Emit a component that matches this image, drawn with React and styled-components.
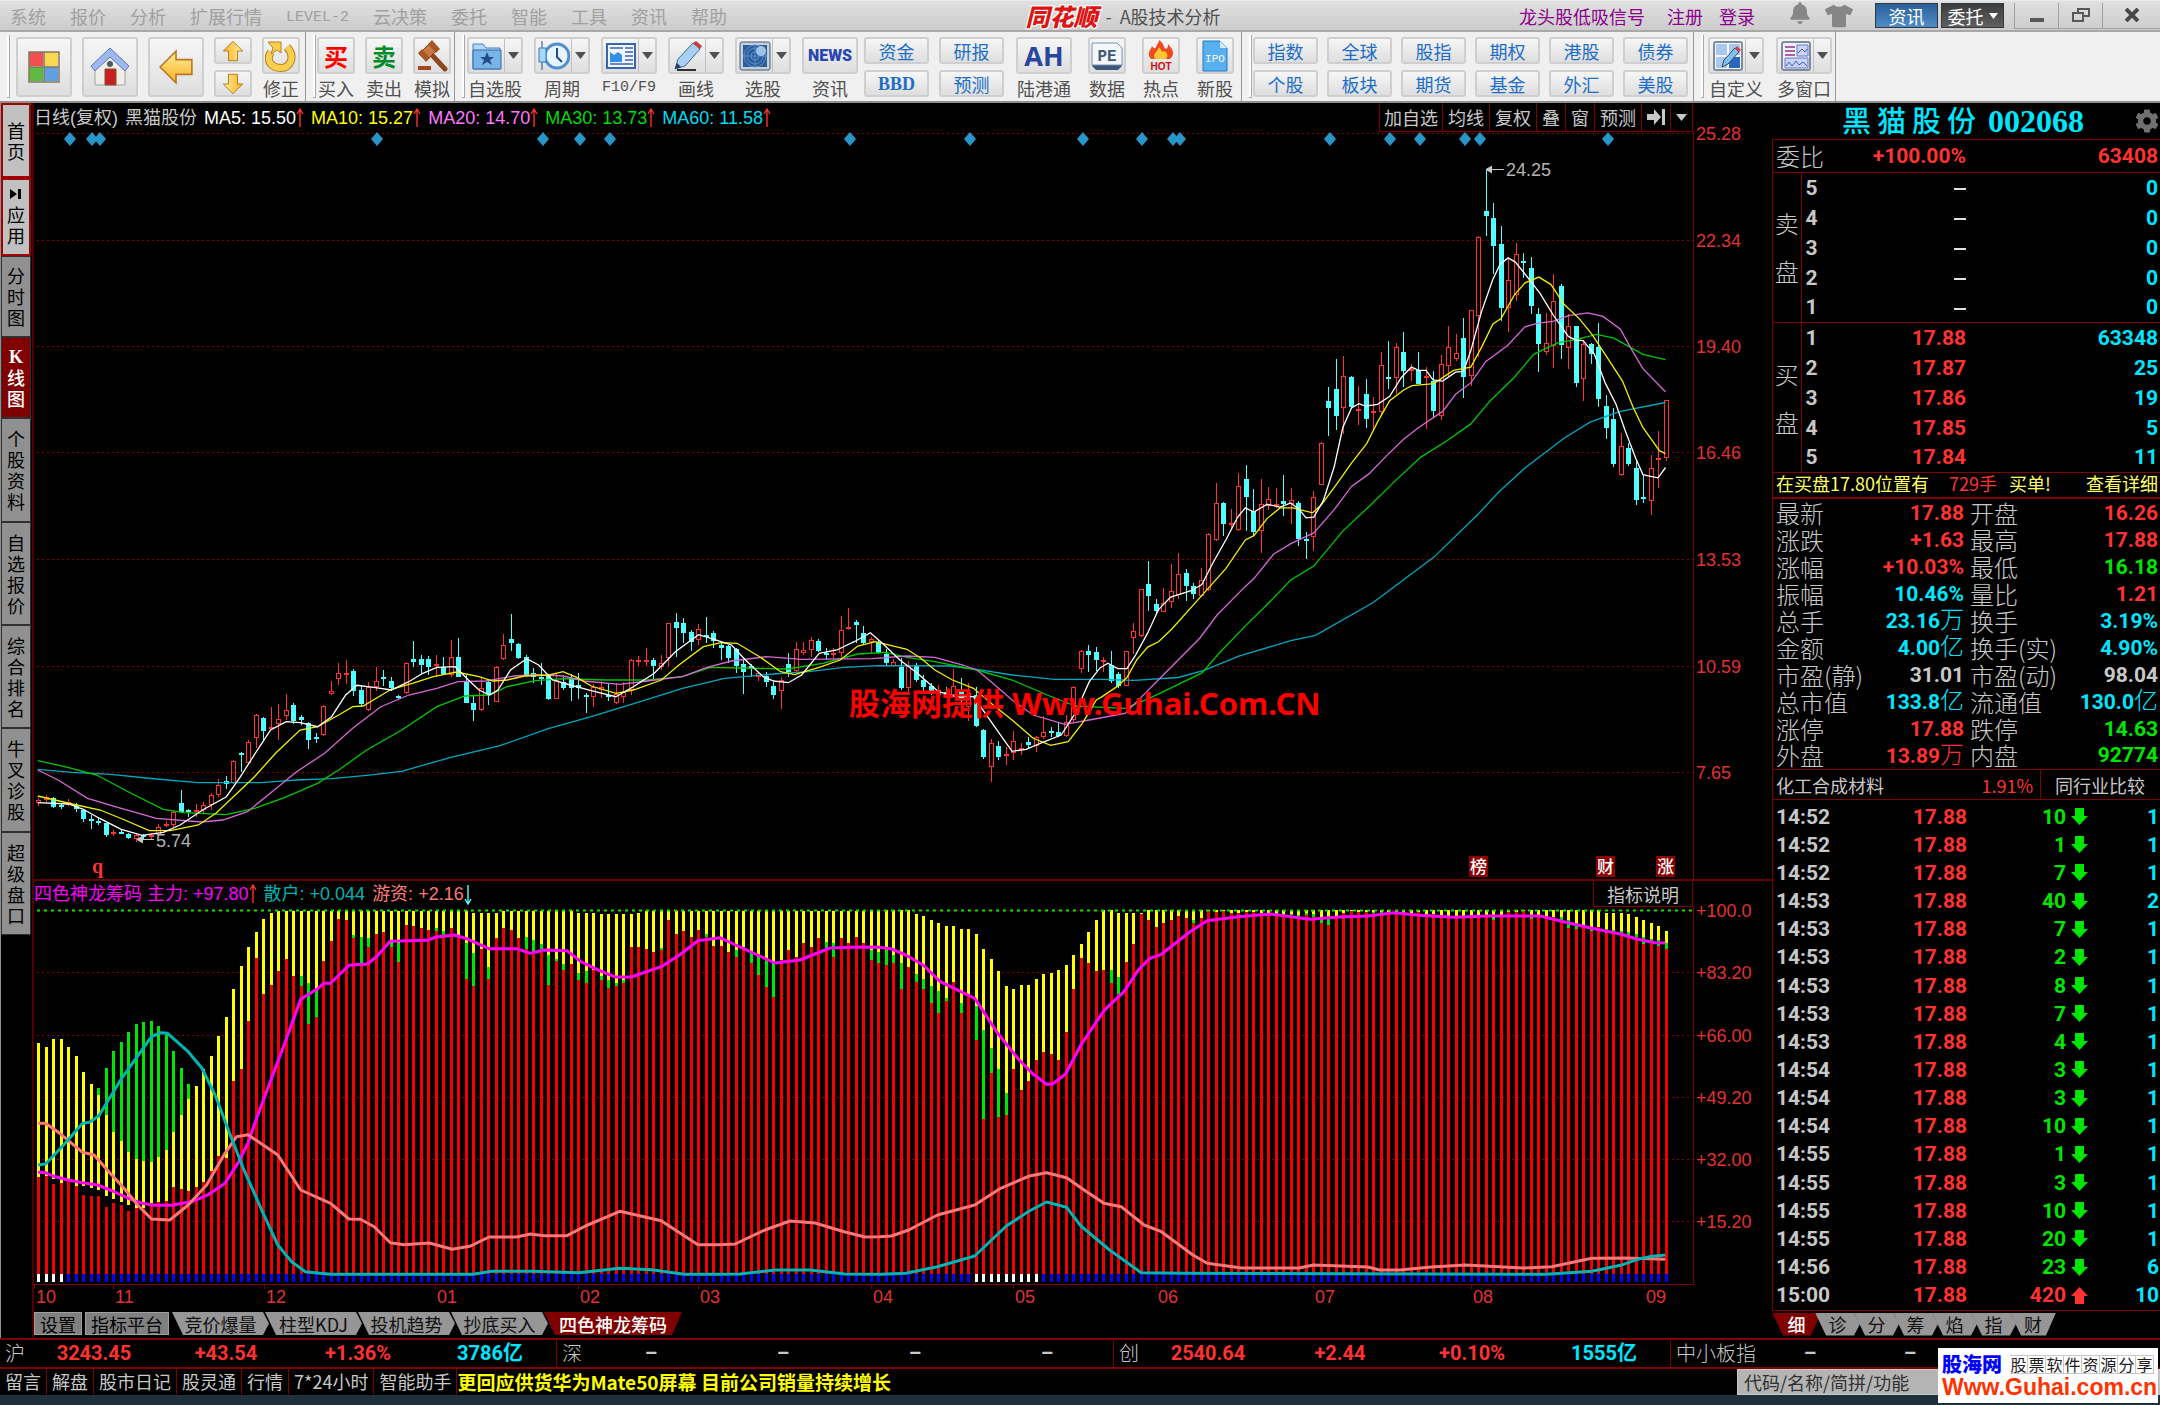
import React from "react";
import styled, { createGlobalStyle, css } from "styled-components";
import { FaBell, FaCog, FaTshirt } from "react-icons/fa";

const CJK = '"Noto Sans CJK SC", sans-serif';
const ARIAL = '"Liberation Sans", "Noto Sans CJK SC", sans-serif';
const DIGITS = 'Roboto, "Noto Sans CJK SC", sans-serif';

const color = {
  red: "#ff3232",
  cyan: "#00e6ff",
  green: "#00e600",
  gray: "#c8c8c8",
  line: "#800000",
  teal: "#00b4b4",
  pink: "#ff7878",
  magenta: "#ff00ff",
};

const GlobalStyle = createGlobalStyle`
  * { box-sizing: border-box; }
  body {
    margin: 0;
    background: #000;
    color: ${color.gray};
    font: 18px/20px ${CJK};
    overflow-x: hidden;
  }
  button, input {
    font: inherit;
    color: inherit;
    margin: 0;
    padding: 0;
    border: 0;
    background: none;
  }
  a { color: inherit; text-decoration: none; }
  table { border-collapse: collapse; border-spacing: 0; width: 100%; }
  td, th { padding: 0; font-weight: normal; text-align: left; }
`;

const Page = styled.div`
  display: flex;
  flex-direction: column;
  min-height: 100vh;
`;

/* ---------- title bar ---------- */

const TitleBar = styled.header`
  display: flex;
  justify-content: space-between;
  align-items: center;
  height: 32px;
  padding-left: 10px;
  background: linear-gradient(#e0e0e0, #cccccc);
  border-top: 1px solid #e8edf2;
  border-bottom: 2px solid #a8a8a8;
  white-space: nowrap;
`;

const Menu = styled.nav`
  display: flex;
  align-items: center;
  gap: 24px;
  color: #a0a0a0;
`;

const Level = styled.span`
  font: 15px/20px "Liberation Mono", monospace;
`;

const AppTitle = styled.div`
  display: flex;
  align-items: center;
  gap: 8px;
  color: #505050;
`;

const Logo = styled.b`
  font-size: 24px;
  font-weight: 900;
  font-style: italic;
  color: #dc1414;
  text-shadow: 1px 1px #fff, -1px -1px #fff, 1px -1px #fff, -1px 1px #fff;
`;

const Account = styled.div`
  display: flex;
  align-items: center;
  color: #8c008c;
  gap: 16px;
  svg { color: #868686; }
`;

const AccountLink = styled.a`
  margin-left: ${props => (props.$wide ? 6 : 0)}px;
`;

const SmallIcons = styled.span`
  display: flex;
  gap: 14px;
  margin: 0 6px 0 18px;
`;

const Actions = styled.div`
  display: flex;
  gap: 3px;
`;

const ActionButton = styled.button`
  display: flex;
  align-items: center;
  justify-content: center;
  gap: 5px;
  width: 63px;
  height: 25px;
  color: #fff;
  background: ${props => (props.$blue ? "linear-gradient(#2c5f98, #4f8cc8)" : "linear-gradient(#3c3c3c, #606060)")};
  border: 1px solid #303840;
`;

const WindowButtons = styled.div`
  display: flex;
  margin-left: -6px;
`;

const WindowButton = styled.button`
  display: flex;
  align-items: center;
  justify-content: center;
  width: ${props => (props.$last ? 58 : 44)}px;
  height: 26px;
  border: 1px solid #a0a0a0;
  border-top: 0;
  border-right: 0;
`;

/* ---------- toolbar ---------- */

const Toolbar = styled.div`
  display: flex;
  height: 71px;
  background: #f0f0f0;
  border-bottom: 2px solid #909090;
  color: #505050;
  white-space: nowrap;
  overflow: hidden;
`;

const Group = styled.div`
  display: flex;
  align-items: flex-start;
  gap: ${props => props.$gap || 10}px;
  padding: 5px ${props => props.$end || 3}px 0 7px;
  border-right: 1px solid #989898;
`;

const Grip = styled.span`
  width: 3px;
  height: 63px;
  margin-top: -2px;
  margin-right: ${props => props.$pull || 0}px;
  border-right: 1px solid #a8a8a8;
  border-bottom: 1px solid #a8a8a8;
  background: #fff;
`;

const Row = styled.div`
  display: flex;
  gap: ${props => props.$gap}px;
`;

const face = css`
  background: linear-gradient(#f6f6f6, #dedede);
  border: 2px solid #cfcfcf;
  border-radius: 3px;
`;

const BigButton = styled.button`
  ${face}
  display: flex;
  align-items: center;
  justify-content: center;
  width: 56px;
  height: 60px;
`;

const Stack = styled.div`
  display: flex;
  flex-direction: column;
  gap: 6px;
`;

const FlatButton = styled.button`
  ${face}
  display: flex;
  align-items: center;
  justify-content: center;
  width: ${props => (props.$narrow ? 38 : 65)}px;
  height: 27px;
  color: #1e6ec8;
`;

const Serif = styled.b`
  font: bold 18px/20px "Liberation Serif", serif;
`;

const ToolButton = styled.button`
  display: flex;
  flex-direction: column;
  align-items: center;
  width: ${props => (props.$wide ? 56 : 38)}px;
`;

const ToolFace = styled.span`
  ${face}
  display: flex;
  align-items: stretch;
  width: 100%;
  height: 37px;
  margin-bottom: 4px;
`;

const ToolIcon = styled.span`
  display: flex;
  flex: 1;
  align-items: center;
  justify-content: center;
`;

const ToolArrow = styled.span`
  display: flex;
  align-items: center;
  justify-content: center;
  width: 17px;
  border-left: 1px solid #c0c0c0;
`;

const ToolLabel = styled.span`
  ${props => props.$mono && css`font: 15px/20px "Liberation Mono", monospace;`}
`;

const WordIcon = styled.b`
  font-family: ${props => props.$font || CJK};
  font-size: ${props => props.$size}px;
  line-height: 24px;
  font-weight: ${props => props.$weight || 700};
  color: ${props => props.$color};
`;

/* ---------- body ---------- */

const Body = styled.main`
  display: flex;
  border-bottom: 2px solid ${color.line};
`;

const Side = styled.nav`
  flex: none;
  width: 34px;
  border-right: 2px solid #500000;
  border-left: 1px solid #909090;
`;

const SideTab = styled.button`
  display: flex;
  flex-direction: column;
  align-items: center;
  justify-content: center;
  width: 30px;
  height: ${props => props.$h}px;
  line-height: 21px;
  color: ${props => (props.$on ? "#fff" : "#000")};
  background: ${props => (props.$on ? color.line : props.$light ? "#c0c0c0" : "#909090")};
  border: ${props => (props.$light ? "2px solid #a00000" : "1px solid #303030")};
  font-weight: ${props => (props.$on ? 500 : 400)};
  svg { margin-bottom: 4px; }
`;

const Charts = styled.section`
  flex: 1;
  min-width: 0;
  display: flex;
  flex-direction: column;
  svg.plot { display: block; width: 100%; height: auto; overflow: visible; }
`;

const ChartHead = styled.div`
  display: flex;
  justify-content: space-between;
  height: 29px;
  padding-right: 79px;
  white-space: nowrap;
`;

const IndicatorHead = styled(ChartHead)`
  height: 28px;
  border-top: 2px solid #640000;
`;

const Values = styled.div`
  display: flex;
  align-items: center;
  gap: 7px;
  font-family: ${ARIAL};
`;

const Value = styled.span`
  display: inline-flex;
  align-items: center;
  color: ${props => props.$color};
`;

const HeadButtons = styled.div`
  display: flex;
  border: 1px solid ${color.line};
  border-top: 0;
`;

const HeadButton = styled.button`
  padding: 0 4px;
  & + & { border-left: 1px solid ${color.line}; padding: 0 5px; }
  svg { display: block; }
`;

const HelpButton = styled.button`
  width: 100px;
  border: 1px solid ${color.line};
  border-top: 0;
`;

const Tabs = styled.div`
  display: flex;
  align-items: flex-start;
  height: 27px;
  padding-top: 2px;
  color: #000;
`;

const PlainTab = styled.button`
  height: 23px;
  margin-right: 3px;
  padding: 0 5px;
  background: #808080;
  border: 1px solid #a0a0a0;
`;

const SlantTab = styled.button`
  height: 23px;
  width: ${props => props.$w}px;
  margin-right: ${props => (props.$w > 50 ? -4 : -6)}px;
  color: ${props => (props.$on ? "#fff" : "#101010")};
  font-weight: ${props => (props.$on ? 500 : 400)};
  background: ${props => (props.$on ? color.line : "#969696")};
  clip-path: ${props =>
    props.$edge
      ? "polygon(0 0, 100% 0, calc(100% - 10px) 100%, 11px 100%)"
      : "polygon(0 0, calc(100% - 6px) 0, 100% 50%, calc(100% - 6px) 100%, 11px 100%)"};
`;

/* ---------- quote panel ---------- */

const Quote = styled.aside`
  flex: none;
  width: 388px;
`;

const QuoteTitle = styled.h1`
  display: flex;
  align-items: center;
  justify-content: space-between;
  height: 36px;
  margin: 0;
  padding: 0 1px 0 70px;
  font: bold 32px/34px "Liberation Serif", "Noto Sans CJK SC", serif;
  color: ${color.cyan};
  white-space: nowrap;
  svg { color: #707070; width: 24px; height: 24px; }
`;

const NameCn = styled.span`
  margin-right: 6px;
  font-size: 29px;
  font-weight: 500;
  letter-spacing: 6px;
`;

const QuoteBox = styled.div`
  border: 1px solid ${color.line};
  border-right: 0;
`;

const Num = styled.td`
  font: 700 21px/24px ${DIGITS};
  text-align: right !important;
  color: ${props => color[props.$c] || color.gray};
  padding-right: ${props => props.$pad || 0}px !important;
  span { font-size: 24px; font-weight: 300; }
  svg { vertical-align: middle; }
`;

const Word = styled.th`
  font-size: 24px;
  line-height: 26px;
  font-weight: 300 !important;
  padding-left: ${props => props.$pad || 3}px !important;
  white-space: nowrap;
`;

const Ratio = styled.table`
  tr { height: 32px; border-bottom: 1px solid ${color.line}; }
`;

const Book = styled.table`
  tbody { border-bottom: 1px solid ${color.line}; }
  tr { height: 30px; }
`;

const BookSide = styled.th`
  width: 28px;
  font-size: 24px;
  line-height: 48px;
  font-weight: 300 !important;
  text-align: center !important;
  border-right: 1px solid ${color.line};
`;

const BookLevel = styled.th`
  width: 30px;
  padding-left: 4px !important;
  font: 700 21px/24px ${DIGITS};
`;

const Notice = styled.div`
  display: flex;
  align-items: center;
  height: 26px;
  padding: 0 2px 4px 3px;
  color: #ffff64;
  border-bottom: 2px solid ${color.line};
  white-space: nowrap;
  a { margin-left: auto; }
`;

const NoticeRed = styled.span`
  margin: 0 12px 0 20px;
  color: ${color.red};
`;

const Stats = styled.table`
  table-layout: fixed;
  border-bottom: 1px solid ${color.line};
  tr { height: 27px; }
`;

const Industry = styled.div`
  display: flex;
  height: 30px;
  align-items: stretch;
  border-bottom: 1px solid ${color.line};
  line-height: 30px;
  padding-left: 3px;
`;

const IndustryPct = styled.span`
  flex: 1;
  padding-right: 7px;
  text-align: right;
  color: ${color.red};
  border-right: 1px solid ${color.line};
`;

const Peer = styled.a`
  width: 119px;
  padding-left: 14px;
`;

const Ticks = styled.table`
  height: 507px;
  margin-top: 3px;
`;

const TickTime = styled.td`
  padding-left: 3px !important;
  font: 700 21px/24px ${DIGITS};
`;

const TickArrow = styled.td`
  width: 24px;
  padding-left: 5px !important;
  svg { display: block; }
`;

/* ---------- footer ---------- */

const IndexBar = styled.div`
  display: flex;
  height: 29px;
  border-bottom: 2px solid ${color.line};
  overflow: hidden;
`;

const IndexGroup = styled.div`
  display: grid;
  flex: none;
  grid-template-columns: ${props => (props.$long ? "88px" : "27px")} repeat(4, ${props => (props.$long ? 100 : 132)}px);
  align-items: center;
  width: 557px;
  padding-left: 1px;
  border-right: 1px solid ${color.line};
  font: 700 20px/26px ${DIGITS};
  color: ${props => props.$color};
  text-align: center;
`;

const IndexName = styled.span`
  padding-left: 4px;
  font: 300 20px/26px ${CJK};
  color: ${color.gray};
  text-align: left;
  white-space: nowrap;
`;

const Cyan = styled.span`
  color: ${color.cyan};
`;

const Links = styled.div`
  display: flex;
  height: 26px;
  white-space: nowrap;
  overflow: hidden;
`;

const LinkItem = styled.a`
  padding: 0 5px 0 5px;
  line-height: 25px;
  border-right: 1px solid ${color.line};
`;

const Ticker = styled.span`
  flex: 1;
  font-size: 19px;
  line-height: 25px;
  font-weight: 700;
  color: #ffff00;
`;

const Search = styled.input`
  width: 423px;
  padding: 0 6px;
  color: #202020;
  background: #b4b4b4;
  border: 1px solid #c8c8c8;
  &::placeholder { color: #303030; opacity: 1; }
`;

const TaskBar = styled.div`
  flex: 1;
  min-height: 10px;
  padding-left: 845px;
  background: #1e303c;
`;

const TaskItem = styled.div`
  width: 188px;
  height: 100%;
  background: #51606a;
`;

const SiteBadge = styled.div`
  position: absolute;
  right: 2px;
  bottom: 2px;
  width: 220px;
  height: 55px;
  padding: 5px 4px 0;
  background: #fff;
  white-space: nowrap;
`;

const BadgeTop = styled.div`
  display: flex;
  align-items: center;
  gap: 8px;
  height: 22px;
  b { color: #0000ff; font-size: 20px; font-weight: 900; }
`;

const BadgeCells = styled.span`
  display: flex;
  color: #202020;
  span {
    width: 18px;
    font-size: 16px;
    line-height: 17px;
    text-align: center;
    border: 1px solid #c8c8c8;
    border-left: 0;
  }
`;

const BadgeUrl = styled.a`
  display: block;
  font: 900 23px/25px "Liberation Sans", sans-serif;
  color: #ff3200;
`;

const BottomArea = styled.footer`
  position: relative;
  display: flex;
  flex-direction: column;
  flex: 1;
`;

/* ---------- icons ---------- */

const Caret = ({ fill = "#505050" }) => (
  <svg width="11" height="7"><path d="M0 0H11L5.5 7Z" fill={fill} /></svg>
);

const GridIcon = () => (
  <svg width="34" height="34">
    <path d="M2 2h14v14H2z" fill="#f05050" /><path d="M17 2h14v14H17z" fill="#f8d850" />
    <path d="M2 17h14v14H2z" fill="#60b840" /><path d="M17 17h14v14H17z" fill="#60a0e0" />
    <path d="M2 2h30v30H2zM17 2v30M2 17h30" fill="none" stroke="#807860" strokeWidth="1.5" />
  </svg>
);

const HomeIcon = () => (
  <svg width="42" height="42">
    <path d="M6 22L21 8 36 22V39H6Z" fill="#f0eee8" stroke="#a0a0a0" />
    <path d="M2 20L21 2 40 20 36 25 21 11 6 25Z" fill="#a0b8f0" stroke="#5878b8" />
    <path d="M16 23h11v16H16z" fill="#c82020" stroke="#805030" />
    <circle cx="21" cy="18" r="3" fill="#505860" />
  </svg>
);

const ArrowIcon = ({ turn = 0, size = 36 }) => (
  <svg width={size} height={size} viewBox="0 0 34 34">
    <defs>
      <linearGradient id="gold" x1="0" y1="0" x2="0" y2="1">
        <stop offset="0" stopColor="#fff0a0" /><stop offset="1" stopColor="#f8b020" />
      </linearGradient>
    </defs>
    <path
      d="M2 17L17 2V10H32V24H17V32Z"
      fill="url(#gold)" stroke="#b87820" strokeWidth="1.5" transform={`rotate(${turn} 17 17)`}
    />
  </svg>
);

const UndoIcon = () => (
  <svg width="32" height="32">
    <path d="M6 12C0 21 7 28 16 28S31 17 22 7" fill="none" stroke="#b88020" strokeWidth="8" />
    <path d="M6 12C0 21 7 28 16 28S31 17 22 7" fill="none" stroke="#f8d050" strokeWidth="6" />
    <path d="M3 2H16V13L12 10 6 14 8 8Z" fill="#f8d050" stroke="#b88020" />
  </svg>
);

const HammerIcon = () => (
  <svg width="32" height="32">
    <path d="M16 15L29 29" stroke="#8c4820" strokeWidth="5" strokeLinecap="round" />
    <path d="M3 14L15 2 22 9 10 21Z" fill="#c87840" stroke="#7c3c18" />
    <path d="M2 13L6 9 14 18 10 22ZM12 4L16 0 24 9 20 13Z" fill="#a85828" />
    <path d="M2 26h13v4H2z" fill="#a04820" />
  </svg>
);

const FolderIcon = () => (
  <svg width="30" height="30">
    <path d="M1 3H11L14 7H28V28H1Z" fill="#b0d8f8" stroke="#4880c0" />
    <path d="M1 9H29V28H1Z" fill="#78b4e8" stroke="#3868a8" />
    <path d="M15 11l2 5h5l-4 3 2 5-5-3-5 3 2-5-4-3h5z" fill="#204c88" />
  </svg>
);

const ClockIcon = () => (
  <svg width="32" height="32">
    <circle cx="19" cy="16" r="12" fill="#e8f4ff" stroke="#5090d0" strokeWidth="3" />
    <path d="M19 8V17L24 22" fill="none" stroke="#204c88" strokeWidth="2" />
    <path d="M4 1V30" stroke="#204c88" /><path d="M1 8h7v14H1z" fill="#a8d8f8" stroke="#3878b8" />
  </svg>
);

const NewsPageIcon = () => (
  <svg width="30" height="28">
    <path d="M1 2H29V26H1Z" fill="#f0f6ff" stroke="#3c64a8" strokeWidth="2" />
    <path d="M4 6H17M19 6H27M19 10H27M19 14H27M19 18H27M4 22H27" stroke="#6888c0" strokeWidth="2" />
    <path d="M4 10l4 3 4-3 4 3v7H4z" fill="#3090e8" />
  </svg>
);

const PencilIcon = () => (
  <svg width="32" height="32">
    <path d="M5 30H24" stroke="#303030" strokeWidth="2" />
    <path d="M3 29L6 19 21 3 28 9 13 26Z" fill="#a8d0f0" stroke="#3868a8" />
    <path d="M21 3L24 1 30 6 28 9Z" fill="#d03838" /><path d="M3 29L5 23 9 27Z" fill="#203858" />
  </svg>
);

const RadarIcon = () => (
  <svg width="32" height="30">
    <rect x="1" y="1" width="30" height="28" rx="2" fill="#c8d0d8" stroke="#405878" />
    <path d="M4 4h24v22H4z" fill="#2c5c9c" />
    <g fill="none" stroke="#5890c8"><circle cx="16" cy="15" r="4" /><circle cx="16" cy="15" r="8" /><circle cx="16" cy="15" r="11" /><path d="M16 4V26M4 15H28" /></g>
    <circle cx="22" cy="10" r="5" fill="#b8dcf8" opacity=".8" />
  </svg>
);

const PeIcon = () => (
  <svg width="32" height="30">
    <path d="M1 22H31V25L27 29H5L1 25Z" fill="#3c5878" />
    <path d="M1 2H26L31 7V24H1Z" fill="#f4f8fc" stroke="#7890b0" />
    <text x="16" y="20" textAnchor="middle" fontFamily="Liberation Mono" fontWeight="bold" fontSize="16" fill="#405878">PE</text>
  </svg>
);

const HotIcon = () => (
  <svg width="32" height="34">
    <path d="M6 20C1 14 6 11 7 7C9 10 10 10 11 8C12 5 14 4 14 1C20 5 18 9 21 10C23 9 23 7 23 5C29 12 30 15 25 20Z" fill="#f04820" />
    <path d="M10 20C7 15 12 14 14 8C17 12 17 14 20 12C24 16 22 18 21 20Z" fill="#ffc830" />
    <text x="16" y="31" textAnchor="middle" fontFamily="Liberation Sans" fontWeight="bold" fontSize="10" fill="#d01010">HOT</text>
  </svg>
);

const IpoIcon = () => (
  <svg width="26" height="32">
    <path d="M1 1H18L25 8V31H1Z" fill="#58b0f0" stroke="#2878c0" /><path d="M18 1V8H25Z" fill="#d0ecff" />
    <text x="13" y="22" textAnchor="middle" fontFamily="Liberation Mono" fontSize="11" fill="#fff">IPO</text>
  </svg>
);

const EditIcon = () => (
  <svg width="30" height="30">
    <rect x="1" y="1" width="28" height="28" rx="2" fill="#f4f8ff" stroke="#808c9c" strokeWidth="2" />
    <path d="M3 3h11v11H3zM16 3h11v11H16zM3 16h11v11H3z" fill="#a8c8f0" /><path d="M16 16h11v11H16z" fill="#2868c0" />
    <path d="M9 26L11 19 22 7 26 11 15 23Z" fill="#80c0f0" stroke="#384858" /><path d="M22 7l2-2 4 4-2 2z" fill="#e04040" />
  </svg>
);

const PanesIcon = () => (
  <svg width="30" height="30">
    <rect x="1" y="1" width="28" height="28" rx="2" fill="#eef0fc" stroke="#808c9c" strokeWidth="2" />
    <path d="M4 6H14M4 10H14M4 14H14" stroke="#b060a0" strokeWidth="2" />
    <path d="M16 4H27V15H16ZM4 17H27V27H4Z" fill="#c8d4f8" stroke="#6878c8" />
    <path d="M5 25l3-4 3 4 4-5 3 4 4-3 4 4M17 12l4-4 3 3 2-3" fill="none" stroke="#4858b0" />
  </svg>
);

const Trend = ({ down }) => (
  <svg width="8" height="22">
    <path
      d={down ? "M4 2V20M1 16L4 21 7 16" : "M4 20V3M1 7L4 2 7 7"}
      fill="none" stroke={down ? "#50ffff" : "#ff3232"} strokeWidth="1.4"
    />
  </svg>
);

/* ---------- chart data ---------- */

const FIRST_X = 38;
const STEP = 7.5;
const barX = i => FIRST_X + i * STEP;

// every entry is a candle: direction, high, body top, body bottom, low
const BASE = `r655,660,668,678 r645,652,660,665 c652,655,682,684 c672,676,682,688 r658,666,674,678 c670,674,688,696
c688,690,718,726 c706,716,724,746 c712,722,728,734 c728,730,765,770 r750,755,760,768 c750,755,760,762 c760,762,774,776
r760,764,776,786 c762,766,771,776 r758,764,770,780 r733,740,764,768 r722,732,738,742 r690,695,736,740 c630,670,695,700
c688,690,696,712 r672,690,695,712 r665,675,690,702 r640,645,675,690 r598,615,645,652 c588,603,612,628 r540,542,610,612
c515,518,525,575 r480,486,548,555 r403,406,475,505 c412,414,454,482 r382,440,445,450 r372,418,432,480 r342,390,408,420
c368,376,424,432 c406,412,420,436 c425,430,480,508 c458,470,476,490 r376,378,466,468 r302,333,342,344 r248,280,298,315
r240,278,284,312 c268,274,333,348 c318,330,372,378 r305,322,390,394 r262,302,322,334 c270,292,298,318 c292,302,325,332
c345,349,354,358 r246,248,340,342 c184,236,246,262 c226,236,256,282 c228,238,262,286 r226,252,258,290 c232,262,282,284
r180,232,286,290 c175,230,290,292 c284,305,368,370 c345,368,390,422 r292,325,390,392 c300,306,343,374 r258,262,365,367
r162,195,238,240 c102,176,190,212 c190,192,234,236 c226,232,288,290 c265,280,290,310 c250,290,296,314 c282,284,358,360
r278,300,356,358 c290,305,325,330 c282,295,325,362 c278,315,325,358 c340,344,350,400 r312,322,352,380 r302,322,330,355
c308,345,350,362 r308,342,370,372 r305,335,352,370 r236,240,330,345 r228,240,246,258 r204,240,246,258 c235,240,258,296
r226,248,262,270 r128,130,235,260 c98,126,145,230 c115,130,158,190 c150,156,185,214 r132,148,180,195 c112,166,172,190
c154,160,182,205 c184,195,204,240 c194,198,235,248 c204,208,258,280 c240,252,276,342 c252,258,266,290 r276,280,290,302
c275,288,306,320 c305,318,345,358 r292,300,332,386 c220,252,275,290 r185,208,272,280 r186,210,220,226 r170,180,210,232
c176,184,212,216 c204,218,222,240 r204,220,224,236 r108,150,220,232 r84,142,146,150 c120,126,134,190 c138,158,190,195
r172,176,186,220 c180,185,218,222 c206,222,250,255 r238,246,258,262 c235,262,325,330 r244,258,325,336 c250,258,300,306
c286,300,322,332 c310,318,340,346 r315,330,345,350 c320,335,350,355 r268,318,345,350 c295,330,360,365 r308,340,380,424
c322,345,438,440 c448,450,532,536 r478,488,560,606 c484,498,530,540 r500,522,528,555 r454,482,520,540 r488,505,510,524
c470,486,496,508 r468,470,498,515 r408,455,470,478 c440,452,460,472 c430,455,468,472 r405,425,468,472 r318,320,420,425
r210,212,268,280 c196,212,224,276 c202,215,240,274`;

const RALLY = `r1448,1455,1458,1490 c1430,1470,1515,1520 c1490,1495,1530,1535 r1430,1430,1530,1530 r1353,1376,1394,1440
r1257,1257,1390,1392 c1178,1244,1276,1320 c1285,1298,1320,1330 r1253,1295,1322,1322 r1188,1262,1293,1310
r1155,1215,1275,1285 c1202,1211,1248,1290 c1240,1248,1272,1285 r1197,1232,1278,1280 r1100,1102,1260,1263
r960,1015,1120,1122 c1013,1017,1075,1110 r1032,1072,1075,1088 r933,968,1092,1096 c910,950,1000,1096
c978,1040,1097,1108 r950,1018,1096,1155 r972,1004,1024,1035 r975,1018,1020,1030 c937,1012,1018,1053
r973,1008,1020,1075 c1012,1015,1118,1137 c1098,1117,1124,1172 r982,1000,1112,1150 r846,847,965,965
c692,732,750,828 c613,698,772,812 r605,661,750,822 c660,664,748,752 r688,752,755,798 c668,710,780,806
r720,758,762,815 r593,630,762,768 c562,664,670,696 r568,580,665,712 c538,594,648,692 r628,640,643,675
c593,645,682,684 r635,660,666,810 c648,674,760,775 r602,628,772,785 r520,580,632,660 r542,597,612,620
c497,554,664,722 r475,477,660,690 r269,271,494,607 c83,198,214,268 c177,219,297,374 c240,290,470,507
r330,392,470,538 r287,320,433,450 c315,338,343,386 c328,357,465,487 c470,487,570,650 r484,568,593,603
r374,452,578,638 c404,408,575,612 r488,522,583,642 c521,522,680,692 r560,570,670,731 c568,572,598,626
c513,580,726,748 c715,745,805,836 c750,782,906,915 r820,858,938,940 c848,862,907,914 c900,917,1008,1021
c938,1000,1006,1016 r883,917,1012,1050 r815,889,893,973 r727,729,890,898`;

// the two halves of the history are kept in their own units
const baseScale = { x: 30, y: 580, kx: 1.4255, ky: 3 };
const rallyScale = { x: 1100, y: 140, kx: 2.306, ky: 2.8 };
const flowScale = { x: 0, y: 860, kx: 2.178, ky: 3 };
const flowLateScale = { x: 880, y: 840, kx: 1.742, ky: 3 };
const plain = { x: 0, y: 0, kx: 1, ky: 1 };

const readCandles = (text, scale) =>
  text.split(/\s+/).map(item => ({
    up: item[0] === "r",
    levels: item.slice(1).split(",").map(v => Math.round(scale.y + v / scale.ky)),
  }));

const candles = [...readCandles(BASE, baseScale), ...readCandles(RALLY, rallyScale)];

const points = (text, scale) =>
  text.split(" ").map(pair => {
    const [x, y] = pair.split(",").map(Number);
    return `${(scale.x + x / scale.kx).toFixed(1)},${(scale.y + y / scale.ky).toFixed(1)}`;
  }).join(" ");

const averages = [
  {
    stroke: "#00a8c0",
    early: "11,568 60,577 115,583 180,597 240,608 330,608 380,600 430,596 480,586 530,574 600,532 670,497 740,445 800,410 870,365 930,325 990,295 1060,282 1110,275 1160,262 1210,257 1310,258 1350,268 1400,285 1460,298 1520,298",
    late: "0,1510 80,1513 180,1505 240,1485 320,1445 440,1402 497,1387 630,1295 770,1168 870,1050 920,985 980,918 1070,835 1130,790 1200,760 1304,735",
  },
  {
    stroke: "#00c800",
    early: "11,542 50,560 95,585 140,635 190,688 220,698 280,704 320,685 360,655 410,610 440,570 480,510 530,450 580,380 620,348 655,345 680,320 720,302 760,296 820,300 880,300 930,290 970,262 1080,267 1130,250 1180,222 1220,217 1250,232 1290,245 1350,270 1400,300 1450,345 1490,378 1530,382 1561,385",
    late: "120,1560 235,1492 280,1430 340,1355 390,1295 440,1232 493,1193 560,1095 630,1015 680,955 740,888 800,842 855,795 900,730 955,665 1000,600 1055,568 1100,558 1145,544 1185,555 1252,600 1304,615",
  },
  {
    stroke: "#d868d8",
    early: "11,570 40,600 82,655 130,685 180,715 245,726 275,720 310,695 345,635 380,575 420,520 460,445 500,380 540,345 580,325 610,305 650,303 690,288 720,284 760,288 790,303 840,313 880,303 930,290 965,262 1000,243 1050,230 1100,238 1200,236 1250,228 1290,232 1330,255 1350,270 1370,305 1400,360 1430,405 1475,433 1510,420 1561,400",
    late: "95,1560 140,1505 230,1395 270,1330 335,1250 355,1228 400,1160 440,1130 493,1100 540,1035 580,970 620,935 660,885 700,838 735,805 790,760 820,712 855,680 890,620 940,575 980,523 1010,513 1045,508 1080,492 1125,484 1160,494 1200,530 1225,585 1252,640 1304,705",
  },
  {
    stroke: "#f0f000",
    early: "11,648 60,672 100,690 135,720 170,752 200,752 240,735 265,700 290,650 320,590 350,520 385,450 410,440 440,405 460,380 475,378 515,328 545,310 575,290 608,276 640,290 660,303 680,300 705,288 740,285 760,275 780,293 800,318 835,340 860,330 900,300 925,255 960,200 985,188 1008,190 1040,230 1070,275 1090,284 1125,262 1155,240 1180,198 1205,185 1250,208 1270,235 1290,270 1315,300 1345,325 1370,370 1400,420 1430,475 1455,496 1480,485 1500,430 1520,360",
    late: "3,1560 40,1530 62,1505 85,1455 110,1420 135,1405 165,1370 235,1275 290,1200 335,1120 355,1108 385,1060 415,1030 445,1030 490,1044 510,1022 545,965 580,905 615,850 640,790 668,730 700,700 720,688 770,682 815,645 855,636 880,580 906,515 925,500 955,435 980,400 1012,384 1040,405 1070,460 1105,500 1135,545 1170,610 1205,675 1230,750 1252,805 1290,870 1304,878",
  },
  {
    stroke: "#ffffff",
    early: "11,668 55,672 76,688 100,716 130,748 160,766 190,757 214,735 246,690 280,650 300,590 321,520 343,450 365,425 385,428 410,440 430,410 450,345 466,316 490,322 515,330 540,305 560,280 580,262 606,260 625,300 640,330 655,345 667,330 685,270 708,236 725,255 745,300 770,315 800,332 835,350 860,320 890,280 920,215 953,164 975,178 1000,195 1020,240 1045,290 1060,303 1081,308 1100,285 1125,220 1150,210 1175,185 1198,158 1215,190 1240,240 1265,280 1295,335 1320,350 1345,350 1360,395 1380,455 1400,514 1420,508 1440,490 1470,465 1490,400 1510,305",
    late: "0,1478 18,1465 41,1480 62,1480 83,1440 110,1380 135,1315 163,1280 210,1262 235,1245 260,1185 290,1120 318,1055 335,1030 355,1042 385,1020 415,1028 440,1016 460,1035 475,1058 493,1056 515,1010 540,915 560,805 580,750 597,738 612,745 640,740 668,718 695,665 718,636 735,645 752,645 768,672 790,675 820,650 838,648 855,590 880,480 906,390 923,347 941,330 958,342 993,395 1015,430 1045,490 1080,550 1097,560 1114,562 1140,600 1165,680 1190,740 1210,810 1235,890 1252,937 1270,942 1287,946 1304,917",
  },
];

const flows = [
  {
    stroke: color.magenta,
    early: "83,937 99,938 115,948 148,960 180,968 213,975 245,993 280,1015 310,1030 335,1036 375,1036 420,1024 455,1003 490,970 520,905 540,850 560,770 590,660 620,550 655,418 690,388 705,370 720,370 760,316 800,312 820,290 850,244 930,241 950,231 990,225 1020,238 1065,266 1125,266 1155,280 1185,270 1235,272 1265,305 1300,328 1340,351 1375,351 1440,320 1480,285 1520,242 1568,233",
    middle: "740,947 775,963 800,960 830,948 860,947",
    late: "0,322 20,327 45,345 75,375 105,425 165,475 205,580 240,655 265,700 290,733 300,733 323,703 350,615 390,512 425,455 450,390 470,355 490,343 540,275 570,242 620,231 680,222 750,238 800,231 850,228 895,218 940,226 1000,232 1060,228 1150,228 1200,249 1240,265 1290,282 1320,298 1350,308 1368,309",
  },
  {
    stroke: color.pink,
    early: "83,790 99,790 130,820 180,877 205,885 240,940 270,985 300,1035 330,1077 370,1080 410,1035 450,975 490,880 515,830 540,824 570,852 605,885 655,990 720,1030 760,1077 785,1078 815,1100 850,1148 880,1154 935,1149 985,1168 1025,1158 1065,1131 1125,1131 1155,1122 1185,1127 1235,1127 1275,1098 1350,1054 1440,1082 1520,1154 1568,1154",
    middle: "735,1244 765,1230 790,1221 815,1223 845,1232 865,1237",
    late: "0,1190 20,1188 50,1170 100,1125 165,1095 210,1045 260,1008 290,998 325,1013 360,1055 390,1090 420,1100 460,1155 490,1175 545,1245 570,1270 630,1284 730,1284 755,1275 850,1281 870,1290 905,1290 960,1281 1020,1275 1120,1284 1170,1280 1240,1255 1300,1254 1368,1258",
  },
  {
    stroke: color.teal,
    early: "83,915 99,912 135,860 180,790 195,787 215,768 265,655 330,530 350,518 365,520 410,575 440,625 470,710 500,820 530,925 570,1050 605,1155 635,1205 665,1235 720,1243 1030,1243 1070,1234 1160,1234 1260,1238 1350,1225 1420,1229 1490,1243 1568,1243",
    middle: "740,1274 775,1270 810,1270 845,1274",
    late: "0,1303 45,1300 100,1280 165,1248 220,1158 260,1113 290,1086 325,1102 350,1158 400,1230 455,1298 530,1300 1160,1303 1240,1294 1290,1276 1320,1258 1345,1249 1368,1245",
  },
];

// indicator columns: top,red top[,green top[,green bottom[,yellow bottom]]]
const COLUMNS = `550,950 560,948 537,972,0,0,958 537,968 560,962 587,978 636,1004,0,0,978 671,1008,0,0,985 685,1008,685,705,990
623,1040,623,766,1008 573,1030,573,815,1018 546,1035,546,843,1026 515,1053,515,875,1035 492,1045,492,897 487,1044,487,902
483,1030,483,906 497,1027,497,892 520,1023,520,870 573,982,573,815 623,986,623,766 671,992,671,716 677,982 627,965 587,933
528,888 470,895 388,662 317,626 262,483 217,293 177,402 158,374 152,334 152,298 152,347 152,379,348 152,491,370 152,470,393
152,303 152,244 152,177 152,181 152,235,226 152,312,231 152,262,235 152,222 152,217 152,262,250 152,307,250 152,195 152,199
152,204 152,209 152,213,204 152,226,213 152,204 152,226 152,357,248 158,379,280 158,267 158,357,320 158,235 152,204 152,209
152,235 152,267,231 152,280,240 152,267,253 152,375,285 152,303,298 152,330,312 152,312 158,360,340 158,370,334 158,330
162,360,348 162,383,360 162,379,370 162,370,360 162,262 158,262 152,267 152,275 152,271,265 152,181 152,222 152,213 152,231
152,209 152,231,222 152,258 152,258 152,275 152,290,270 152,262 152,310,280 152,345,290 152,380,300 152,410,310 152,300
152,270 152,290 152,250 152,260 152,235 152,270,245 152,290,250 152,235 152,250 152,230 152,250 152,300,270 152,310,275
151,315,270 151,310,285 151,387,310 151,320 162,365,342 168,387,356 180,428,378 190,460,392 198,424,415 198,365 208,460,428
208,405 221,540,437 266,778,510 297,640,563 333,770,626 378,766,698 387,626 374,690 374,662 356,600 343,577 338,581 329,600
315,515 284,387 253,293 217,310 180,333 151,329 151,370,330 159,401,352 159,306 159,253 159,162 151,180 151,202 151,189
151,180 151,168 151,175 151,189,180 151,175 151,153 151,155 151,153 151,158 151,158 151,155 151,155 151,160 151,163 151,163
151,165 151,165,161 151,170,164 151,165,160 151,170,163 151,189,175 151,194,176 151,170 151,160 151,154 151,156 151,156
151,160,156 151,162,157 151,160,156 151,160,156 151,158 151,158 151,157 151,172,168 151,162 151,165 151,168 151,174,168
151,168 151,172 151,168 151,172 151,180,174 151,170 151,155 151,155 151,154 151,177,170 151,172 151,174 151,172 151,185,170
151,203,180 151,207,195 151,198 151,212,200 151,202 159,220,208 159,218,210 159,220,212 162,225,215 172,230,222 180,253,230
190,243,236 198,257,240 212,266,250 217,266,257 217,261,254 221,257,252 212,235`;

const columns = COLUMNS.split(/\s+/).slice(0, 218).map(item => item.split(",").map(v => v && 860 + Math.round(v / 3)));

const diamonds = [70, 92, 100, 377, 543, 580, 610, 850, 970, 1083, 1142, 1173, 1180, 1330, 1390, 1420, 1465, 1480, 1608];
const prices = [["25.28", 133], ["22.34", 240], ["19.40", 346], ["16.46", 452], ["13.53", 559], ["10.59", 666], ["7.65", 772]];
const flowAxis = [["+100.0", 910], ["+83.20", 972], ["+66.00", 1035], ["+49.20", 1097], ["+32.00", 1159], ["+15.20", 1221]];
const months = [["10", 36], ["11", 115], ["12", 266], ["01", 437], ["02", 580], ["03", 700], ["04", 873], ["05", 1015], ["06", 1158], ["07", 1315], ["08", 1473], ["09", 1646]];
const tags = [["榜", 1469], ["财", 1596], ["涨", 1656]];

const PriceChart = () => (
  <svg className="plot" viewBox="34 132 1738 747" fontFamily={ARIAL} fontSize="18">
    {prices.map(([label, y]) => (
      <g key={label}>
        <path d={`M37 ${y}.5H1693`} stroke="#8c0000" strokeDasharray="2 3" />
        <text x="1696" y={y + 7} fill="#e13232">{label}</text>
      </g>
    ))}
    <path d="M1693.5 132V879" stroke={color.line} />
    {diamonds.map(x => <path key={x} d={`M${x} 132l6 7-6 7-6-7z`} fill="#2896c8" />)}
    <g shapeRendering="crispEdges">
      {candles.map(({ up, levels: [high, top, bottom, low] }, i) => {
        const x = Math.round(barX(i));
        const h = Math.max(bottom - top, 2);
        return up ? (
          <g key={i} fill="none" stroke="#ff3232">
            <path d={`M${x + 0.5} ${high}V${top}M${x + 0.5} ${top + h}V${low}`} />
            <rect x={x - 1.5} y={top + 0.5} width="4" height={h - 1} />
          </g>
        ) : (
          <g key={i} fill="#50ffff">
            <rect x={x} y={high} width="1" height={low - high} />
            <rect x={x - 2} y={top} width="5" height={h} />
          </g>
        );
      })}
    </g>
    {averages.map(line => (
      <polyline
        key={line.stroke} fill="none" stroke={line.stroke} strokeWidth="1.3"
        points={`${points(line.early, baseScale)} ${points(line.late, rallyScale)}`}
      />
    ))}
    <path d="M1486 169.500H1504M1492 166L1486 169.500 1492 173M137 839.500H154M143 836L137 839.500 143 843" stroke="#c8c8c8" fill="#c8c8c8" />
    <text x="1506" y="176" fill="#b4b4b4">24.25</text>
    <text x="156" y="847" fill="#b4b4b4">5.74</text>
    <text x="92" y="873" fill={color.red} fontFamily="Liberation Serif" fontSize="20" fontWeight="bold">q</text>
    {tags.map(([tag, x]) => (
      <g key={tag}>
        <rect x={x} y="856" width="19" height="21" fill="#8c0000" />
        <text x={x + 1} y="873" fill="#fff" fontSize="17" fontWeight="500">{tag}</text>
      </g>
    ))}
    <text x="849" y="715" fill="#ff0000" fontWeight="700" fontSize="31" fontFamily='"Noto Sans", "Noto Sans CJK SC", sans-serif'>
      股海网提供 Www.Guhai.Com.CN
    </text>
  </svg>
);

const IndicatorChart = () => (
  <svg className="plot" viewBox="34 907 1738 403" fontFamily={ARIAL} fontSize="18">
    {flowAxis.map(([label, y]) => (
      <g key={label}>
        <path d={`M37 ${y}.5H1693`} stroke="#8c0000" strokeDasharray="2 3" />
        <text x="1696" y={y + 7} fill="#e13232">{label}</text>
      </g>
    ))}
    <g shapeRendering="crispEdges">
      {columns.map(([top, red, greenTop, greenEnd, yellowEnd], i) => {
        const x = Math.round(barX(i)) - 1;
        const white = i < 4 || (i > 124 && i < 134);
        const g = greenTop > 860;
        const gEnd = greenEnd > 860 ? greenEnd : red;
        return (
          <g key={i}>
            <rect x={x} y={top} width="3" height={Math.max((yellowEnd || red) - top, 1)} fill="#ffff00" />
            {g && <rect x={x} y={greenTop} width="3" height={gEnd - greenTop} fill="#00e600" />}
            <rect x={x} y={red} width="3" height={1274 - red} fill="#f00000" />
            <rect x={x} y="1274" width="3" height="8" fill={white ? "#fff" : "#0000ff"} />
          </g>
        );
      })}
    </g>
    <path d="M37 910.500H1693" stroke="#00e600" strokeWidth="2" strokeDasharray="3 4" />
    {flows.map(line => (
      <polyline
        key={line.stroke} fill="none" stroke={line.stroke} strokeWidth="3" strokeLinejoin="round"
        points={`${points(line.early, flowScale)} ${points(line.middle, plain)} ${points(line.late, flowLateScale)}`}
      />
    ))}
    <path d="M34 1284.500H1693.500V907" stroke={color.line} fill="none" />
    {months.map(([label, x]) => (
      <g key={label}>
        <path d={`M${x - 2}.5 1285V1289`} stroke={color.line} />
        <text x={x} y="1303" fill="#e13232">{label}</text>
      </g>
    ))}
  </svg>
);

/* ---------- sections ---------- */

const menus = ["系统", "报价", "分析", "扩展行情", "LEVEL-2", "云决策", "委托", "智能", "工具", "资讯", "帮助"];

const Header = () => (
  <TitleBar>
    <Menu>
      {menus.map(m => <a href="#" key={m}>{m === "LEVEL-2" ? <Level>{m}</Level> : m}</a>)}
    </Menu>
    <AppTitle><Logo>同花顺</Logo><span>-</span><span>A股技术分析</span></AppTitle>
    <Account>
      <AccountLink href="#">龙头股低吸信号</AccountLink>
      <AccountLink href="#" $wide>注册</AccountLink>
      <AccountLink href="#">登录</AccountLink>
      <SmallIcons><FaBell size={22} /><FaTshirt size={28} /></SmallIcons>
      <Actions>
        <ActionButton $blue>资讯</ActionButton>
        <ActionButton>委托<svg width="9" height="6"><path d="M0 0H9L4.500 6Z" fill="#fff" /></svg></ActionButton>
      </Actions>
      <WindowButtons>
        <WindowButton aria-label="最小化"><svg width="14" height="16"><path d="M0 11h14v4H0z" fill="#585858" /></svg></WindowButton>
        <WindowButton aria-label="还原">
          <svg width="18" height="16" fill="none" stroke="#585858" strokeWidth="2"><path d="M1 6h10v8H1zM6 5V2h11v7h-5" /></svg>
        </WindowButton>
        <WindowButton $last aria-label="关闭"><svg width="14" height="14"><path d="M1 1L13 13M13 1L1 13" stroke="#484848" strokeWidth="4" /></svg></WindowButton>
      </WindowButtons>
    </Account>
  </TitleBar>
);

const Tool = ({ icon, label, split, wide, mono }) => (
  <ToolButton $wide={split || wide}>
    <ToolFace>
      <ToolIcon>{icon}</ToolIcon>
      {split && <ToolArrow><Caret /></ToolArrow>}
    </ToolFace>
    <ToolLabel $mono={mono}>{label}</ToolLabel>
  </ToolButton>
);

const Pair = ({ top, bottom, narrow }) => (
  <Stack>
    <FlatButton $narrow={narrow}>{top}</FlatButton>
    <FlatButton $narrow={narrow}>{bottom}</FlatButton>
  </Stack>
);

const markets = [["指数", "个股"], ["全球", "板块"], ["股指", "期货"], ["期权", "基金"], ["港股", "外汇"], ["债券", "美股"]];

const Tools = () => (
  <Toolbar>
    <Group $end={5}>
      <Grip $pull={-4} />
      <BigButton aria-label="版面"><GridIcon /></BigButton>
      <BigButton aria-label="首页"><HomeIcon /></BigButton>
      <BigButton aria-label="后退"><ArrowIcon /></BigButton>
      <Pair narrow top={<ArrowIcon turn={90} size={22} />} bottom={<ArrowIcon turn={-90} size={22} />} />
      <Tool icon={<UndoIcon />} label="修正" />
    </Group>
    <Group>
      <Grip $pull={-9} />
      <Tool icon={<WordIcon $size={24} $color="#ff0000">买</WordIcon>} label="买入" />
      <Tool icon={<WordIcon $size={24} $color="#008c28">卖</WordIcon>} label="卖出" />
      <Tool icon={<HammerIcon />} label="模拟" />
    </Group>
    <Group $gap={6} $end={7}>
      <Grip $pull={-4} />
      <Row $gap={11}>
        <Tool split icon={<FolderIcon />} label="自选股" />
        <Tool split icon={<ClockIcon />} label="周期" />
        <Tool split mono icon={<NewsPageIcon />} label="F10/F9" />
        <Tool split icon={<PencilIcon />} label="画线" />
        <Tool split icon={<RadarIcon />} label="选股" />
        <Tool wide icon={<WordIcon $size={16} $color="#2846b4" $weight={900} $font="Roboto">NEWS</WordIcon>} label="资讯" />
      </Row>
      <Row $gap={10}>
        <Pair top="资金" bottom={<Serif>BBD</Serif>} />
        <Pair top="研报" bottom="预测" />
      </Row>
      <span />
      <Row $gap={16}>
        <Tool wide icon={<WordIcon $size={27} $color="#2846a0" $font="Open Sans">AH</WordIcon>} label="陆港通" />
        <Tool icon={<PeIcon />} label="数据" />
        <Tool icon={<HotIcon />} label="热点" />
        <Tool icon={<IpoIcon />} label="新股" />
      </Row>
    </Group>
    <Group $gap={9} $end={5}>
      <Grip $pull={-8} />
      {markets.map(([top, bottom]) => <Pair key={top} top={top} bottom={bottom} />)}
    </Group>
    <Group $gap={12}>
      <Grip $pull={-8} />
      <Tool split icon={<EditIcon />} label="自定义" />
      <Tool split icon={<PanesIcon />} label="多窗口" />
    </Group>
  </Toolbar>
);

const sideTabs = [["首页", 75], ["应用", 78], ["分时图", 81], ["K线图", 81], ["个股资料", 104], ["自选报价", 103], ["综合排名", 103], ["牛叉诊股", 104], ["超级盘口", 103]];

const SideTabs = () => (
  <Side>
    {sideTabs.map(([name, h], i) => (
      <SideTab key={name} $h={h} $light={i < 2} $on={i === 3}>
        {i === 1 && <svg width="12" height="12"><path d="M0 1L7 6 0 11ZM8 1h3v10H8z" /></svg>}
        {[...name].map((c, n) => (c === "K" ? <Serif key={n}>K</Serif> : <span key={n}>{c}</span>))}
      </SideTab>
    ))}
  </Side>
);

const maValues = [["MA5: 15.50", "#ffffff"], ["MA10: 15.27", "#ffff00"], ["MA20: 14.70", "#ff78ff"], ["MA30: 13.73", "#00dc00"], ["MA60: 11.58", "#00dcf0"]];

const Chart = () => (
  <Charts>
    <ChartHead>
      <Values>
        <span>日线(复权)</span>
        <span>黑猫股份</span>
        {maValues.map(([text, c]) => <Value key={text} $color={c}>{text}<Trend /></Value>)}
      </Values>
      <HeadButtons>
        {["加自选", "均线", "复权", "叠", "窗", "预测"].map(b => <HeadButton key={b}>{b}</HeadButton>)}
        <HeadButton aria-label="到最后">
          <svg width="18" height="18"><path d="M0 6H7V1L14 9 7 17V12H0ZM15 1h3v16h-3z" fill="#c8c8c8" /></svg>
        </HeadButton>
        <HeadButton aria-label="更多"><Caret fill="#c8c8c8" /></HeadButton>
      </HeadButtons>
    </ChartHead>
    <PriceChart />
    <IndicatorHead>
      <Values>
        <Value $color={color.magenta}>四色神龙筹码&nbsp;主力: +97.80<Trend /></Value>
        <Value $color={color.teal}>散户: +0.044</Value>
        <Value $color={color.pink}>游资: +2.16<Trend down /></Value>
      </Values>
      <HelpButton>指标说明</HelpButton>
    </IndicatorHead>
    <IndicatorChart />
    <Tabs>
      <PlainTab>设置</PlainTab>
      <PlainTab>指标平台</PlainTab>
      {["竞价爆量", "柱型KDJ", "投机趋势", "抄底买入"].map(t => <SlantTab key={t} $w={97}>{t}</SlantTab>)}
      <SlantTab $w={138} $on $edge>四色神龙筹码</SlantTab>
    </Tabs>
  </Charts>
);

const asks = ["5", "4", "3", "2", "1"].map(n => [n, "—", "0"]);
const bids = [["1", "17.88", "63348"], ["2", "17.87", "25"], ["3", "17.86", "19"], ["4", "17.85", "5"], ["5", "17.84", "11"]];

const BookRows = ({ side, rows, price }) => (
  <tbody>
    {rows.map(([level, p, volume], i) => (
      <tr key={level}>
        {i === 0 && <BookSide rowSpan={5}>{side[0]}<br />{side[1]}</BookSide>}
        <BookLevel>{level}</BookLevel>
        <Num $c={price}>{p === "—" ? <svg width="12" height="2"><path d="M0 0h12v2H0z" fill="#e0e0e0" /></svg> : p}</Num>
        <Num $c="cyan" $pad={2} width="194">{volume}</Num>
      </tr>
    ))}
  </tbody>
);

const stats = [
  ["最新", "17.88", "red", "开盘", "16.26", "red"],
  ["涨跌", "+1.63", "red", "最高", "17.88", "red"],
  ["涨幅", "+10.03%", "red", "最低", "16.18", "green"],
  ["振幅", "10.46%", "cyan", "量比", "1.21", "red"],
  ["总手", "23.16万", "cyan", "换手", "3.19%", "cyan"],
  ["金额", "4.00亿", "cyan", "换手(实)", "4.90%", "cyan"],
  ["市盈(静)", "31.01", "gray", "市盈(动)", "98.04", "gray"],
  ["总市值", "133.8亿", "cyan", "流通值", "130.0亿", "cyan"],
  ["涨停", "17.88", "red", "跌停", "14.63", "green"],
  ["外盘", "13.89万", "red", "内盘", "92774", "green"],
];

// the unit sign after a number is drawn lighter than the digits
const amount = text => {
  const unit = text.match(/[万亿]/);
  return unit ? <>{text.slice(0, -1)}<span>{unit[0]}</span></> : text;
};

const ticks = [
  ["14:52", 10, 1], ["14:52", 1, 1], ["14:52", 7, 1], ["14:53", 40, 2], ["14:53", 7, 1], ["14:53", 2, 1],
  ["14:53", 8, 1], ["14:53", 7, 1], ["14:53", 4, 1], ["14:54", 3, 1], ["14:54", 3, 1], ["14:54", 10, 1],
  ["14:55", 1, 1], ["14:55", 3, 1], ["14:55", 10, 1], ["14:55", 20, 1], ["14:56", 23, 6], ["15:00", 420, 10],
];

const QuotePanel = () => (
  <Quote>
    <QuoteTitle>
      <span><NameCn>黑猫股份</NameCn>002068</span>
      <FaCog />
    </QuoteTitle>
    <QuoteBox>
      <Ratio>
        <tbody>
          <tr><Word>委比</Word><Num $c="red">+100.00%</Num><Num $c="red" $pad={2} width="194">63408</Num></tr>
        </tbody>
      </Ratio>
      <Book>
        <BookRows side="卖盘" rows={asks} price="gray" />
        <BookRows side="买盘" rows={bids} price="red" />
      </Book>
      <Notice>在买盘17.80位置有<NoticeRed>729手</NoticeRed>买单!<a href="#">查看详细</a></Notice>
      <Stats>
        <colgroup><col width="90" /><col width="101" /><col width="97" /><col /></colgroup>
        <tbody>
          {stats.map(([a, av, ac, b, bv, bc]) => (
            <tr key={a}>
              <Word>{a}</Word><Num $c={ac}>{amount(av)}</Num>
              <Word $pad={6}>{b}</Word><Num $c={bc} $pad={2}>{amount(bv)}</Num>
            </tr>
          ))}
        </tbody>
      </Stats>
      <Industry>
        <span>化工合成材料</span>
        <IndustryPct>1.91%</IndustryPct>
        <Peer href="#">同行业比较</Peer>
      </Industry>
      <Ticks>
        <tbody>
          {ticks.map(([time, volume, count], i) => {
            const up = time === "15:00";
            return (
              <tr key={i}>
                <TickTime>{time}</TickTime>
                <Num $c="red">17.88</Num>
                <Num $c={up ? "red" : "green"} width="99">{volume}</Num>
                <TickArrow>
                  <svg width="17" height="17">
                    <path d={up ? "M4 17V9H0L8.500 0 17 9H13V17Z" : "M4 0V8H0L8.500 17 17 8H13V0Z"} fill={up ? color.red : color.green} />
                  </svg>
                </TickArrow>
                <Num $c="cyan" $pad={1} width="70">{count}</Num>
              </tr>
            );
          })}
        </tbody>
      </Ticks>
    </QuoteBox>
    <Tabs>
      <SlantTab $w={49} $on $edge>细</SlantTab>
      {["诊", "分", "筹", "焰", "指"].map(t => <SlantTab key={t} $w={45}>{t}</SlantTab>)}
      <SlantTab $w={46} $edge>财</SlantTab>
    </Tabs>
  </Quote>
);

const links = ["留言", "解盘", "股市日记", "股灵通", "行情", "7*24小时", "智能助手"];

const Footer = () => (
  <BottomArea>
    <IndexBar>
      <IndexGroup $color={color.red}>
        <IndexName>沪</IndexName><span>3243.45</span><span>+43.54</span><span>+1.36%</span><Cyan>3786亿</Cyan>
      </IndexGroup>
      <IndexGroup $color={color.gray}>
        <IndexName>深</IndexName><span>–</span><span>–</span><span>–</span><span>–</span>
      </IndexGroup>
      <IndexGroup $color={color.red}>
        <IndexName>创</IndexName><span>2540.64</span><span>+2.44</span><span>+0.10%</span><Cyan>1555亿</Cyan>
      </IndexGroup>
      <IndexGroup $color={color.gray} $long>
        <IndexName>中小板指</IndexName><span>–</span><span>–</span>
      </IndexGroup>
    </IndexBar>
    <Links>
      {links.map(l => <LinkItem href="#" key={l}>{l}</LinkItem>)}
      <Ticker>更回应供货华为Mate50屏幕 目前公司销量持续增长</Ticker>
      <Search aria-label="搜索" placeholder="代码/名称/简拼/功能" />
    </Links>
    <TaskBar><TaskItem /></TaskBar>
    <SiteBadge>
      <BadgeTop>
        <b>股海网</b>
        <BadgeCells>{[..."股票软件资源分享"].map(c => <span key={c}>{c}</span>)}</BadgeCells>
      </BadgeTop>
      <BadgeUrl href="#">Www.Guhai.com.cn</BadgeUrl>
    </SiteBadge>
  </BottomArea>
);

const App = () => (
  <Page>
    <GlobalStyle />
    <Header />
    <Tools />
    <Body>
      <SideTabs />
      <Chart />
      <QuotePanel />
    </Body>
    <Footer />
  </Page>
);

export default App;
